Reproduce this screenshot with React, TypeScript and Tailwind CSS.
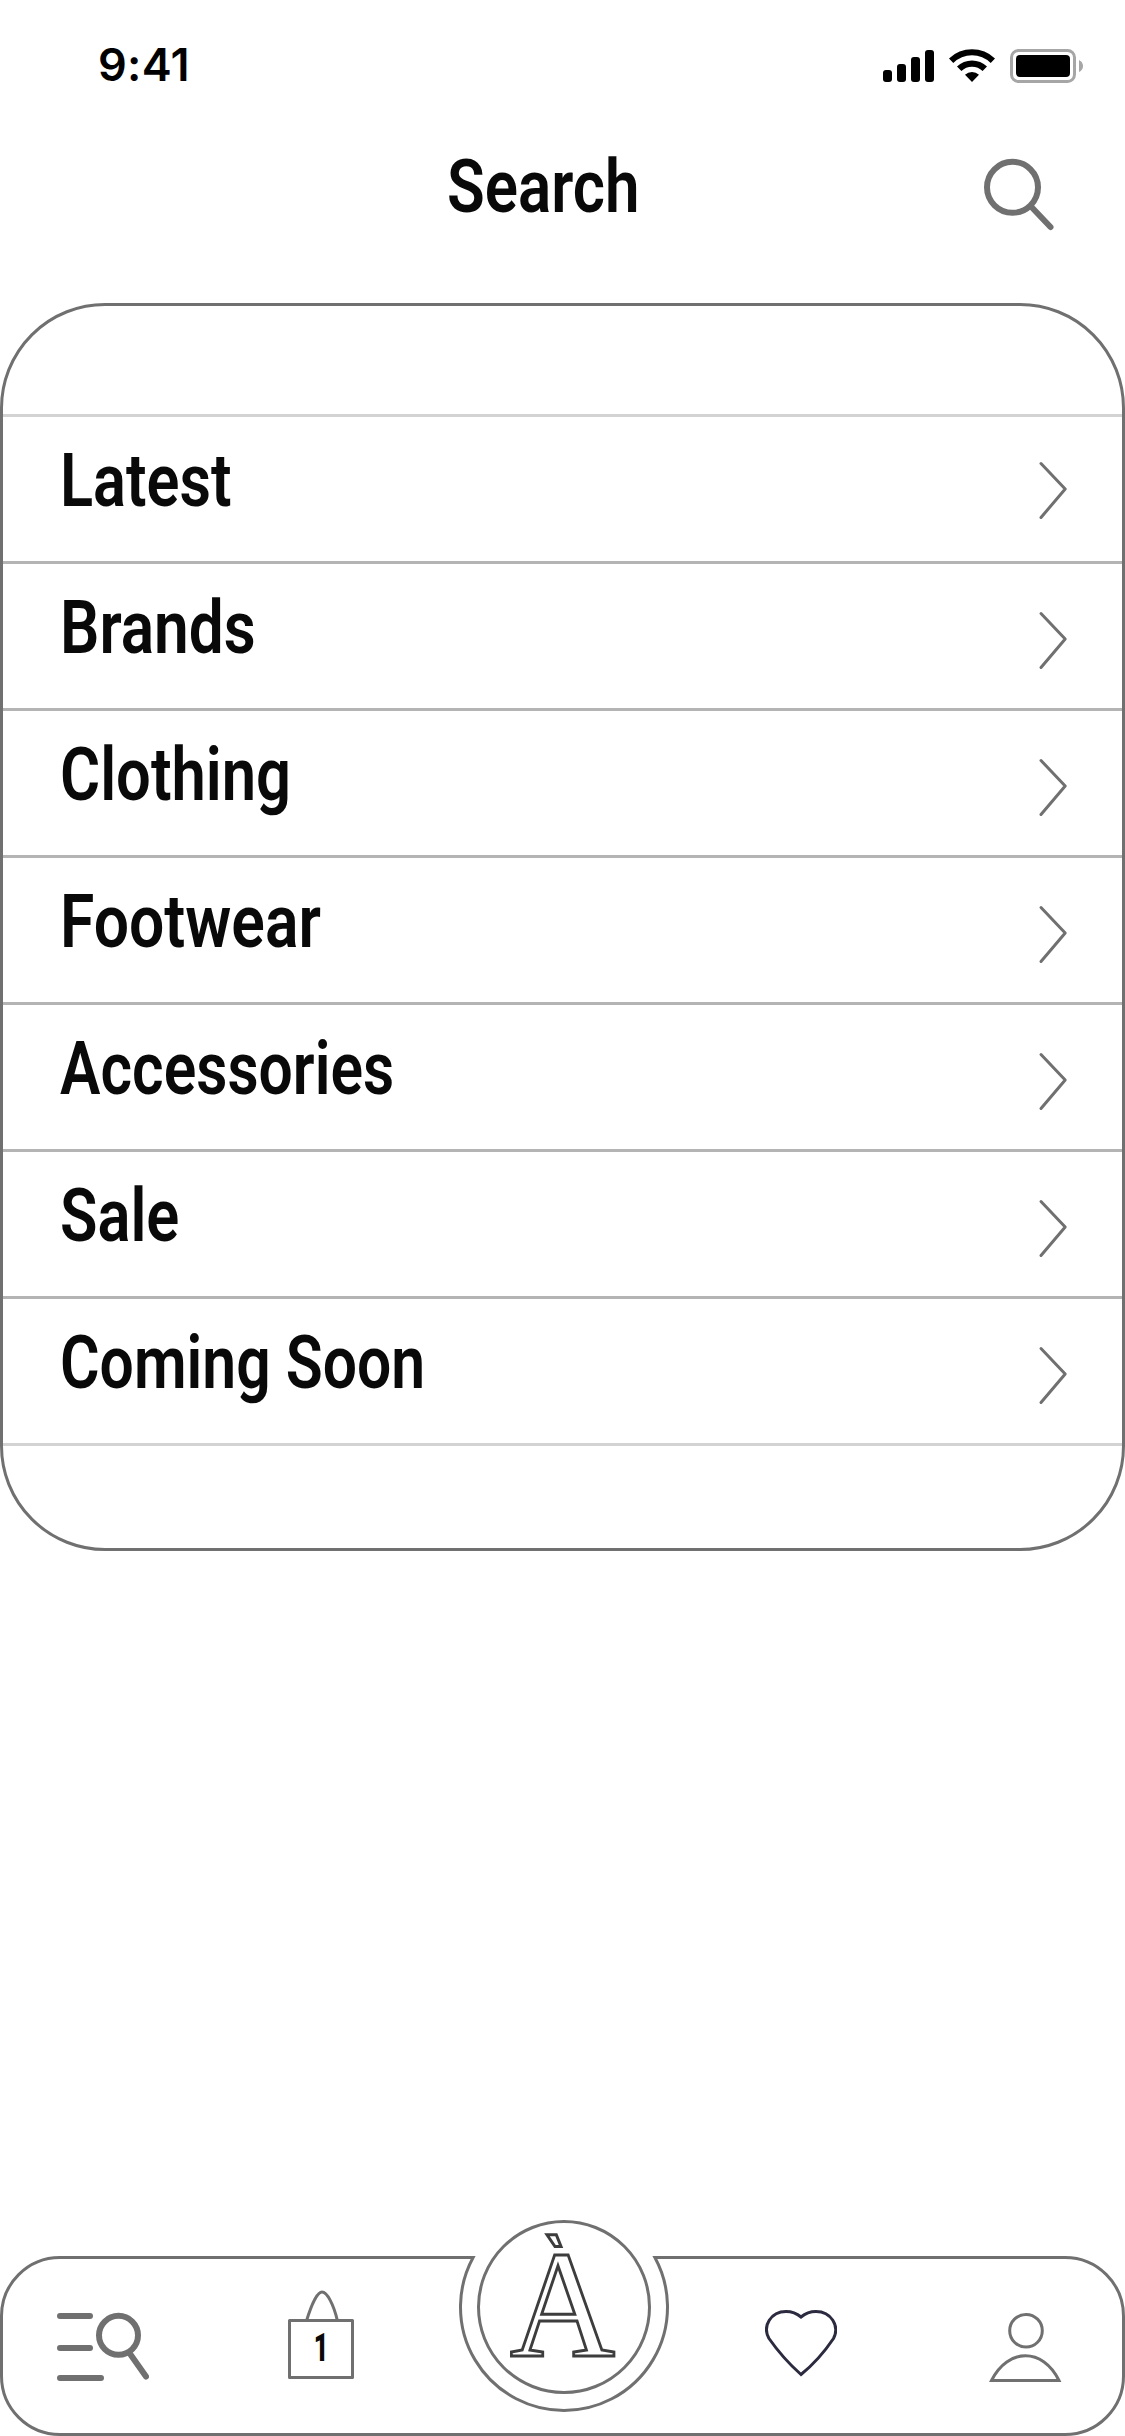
import React from "react";

type Category = { label: string; fit: string; chevron: string };

const categories: Category[] = [
  { label: "Latest", fit: "scale-x-[0.816]", chevron: "mt-[46px]" },
  { label: "Brands", fit: "scale-x-[0.828]", chevron: "mt-[49px]" },
  { label: "Clothing", fit: "scale-x-[0.819]", chevron: "mt-[49px]" },
  { label: "Footwear", fit: "scale-x-[0.832]", chevron: "mt-[49px]" },
  { label: "Accessories", fit: "scale-x-[0.808]", chevron: "mt-[49px]" },
  { label: "Sale", fit: "scale-x-[0.818]", chevron: "mt-[49px]" },
  { label: "Coming Soon", fit: "scale-x-[0.808]", chevron: "mt-[49px]" },
];

function StatusBar() {
  return (
    <div className="flex h-[132px] items-start pl-[98px] font-['Inter',sans-serif]">
      <span className="mt-[38px] w-[99px] text-[45px] leading-[54px] font-semibold tracking-[0.3px] text-black">9:41</span>
      <svg className="mt-[46px] ml-[683px]" width="210" height="40" viewBox="880 46 210 40">
        <rect x="883" y="70" width="9" height="12" rx="3" />
        <rect x="897" y="64" width="9" height="18" rx="3" />
        <rect x="911" y="57" width="9" height="25" rx="3" />
        <rect x="925" y="50" width="9" height="32" rx="3" />
        <path d="M949 58.5A33 33 0 0 1 995 58.5L990.7 63A26.7 26.7 0 0 0 953.3 63ZM957 66.5A21.5 21.5 0 0 1 987 66.5L982.6 71A15.2 15.2 0 0 0 961.4 71ZM965 74.7A10.3 10.3 0 0 1 979 74.7L972 82Z" />
        <rect x="1011.5" y="50.5" width="63" height="31" rx="7" fill="none" stroke="#a6a6a6" strokeWidth="3" />
        <rect x="1016" y="55" width="54" height="22" rx="4" />
        <path d="M1079 60Q1083 62 1083 66T1079 72Z" fill="#a6a6a6" />
      </svg>
    </div>
  );
}

function Header() {
  return (
    <header className="flex h-[171px] items-start pl-[447px]">
      <h1 className="mt-[10px] w-[529px] origin-left scale-x-[0.824] text-[75px] leading-[88px] font-[620] text-[#0a0909]">Search</h1>
      <svg className="mt-[24px]" width="80" height="80" viewBox="976 156 80 80" fill="none" stroke="#707070" strokeWidth="6" strokeLinecap="round">
        <circle cx="1012.5" cy="187.3" r="25.5" />
        <path d="M1031 206.5L1050.5 227" />
      </svg>
    </header>
  );
}

function CategoryList() {
  return (
    <main className="flex h-[1248px] flex-col rounded-[105px] border-[3px] border-[#707070] pt-[108px]">
      {categories.map(({ label, fit, chevron }) => (
        <button key={label} className="flex h-[147px] w-full shrink-0 items-start border-t-[3px] border-[#b4b4b4] pl-[57px] text-left first:border-[#d3d3d3]">
          <span className={`${fit} mt-[19px] w-[976px] origin-left text-[75px] leading-[88px] font-[620] whitespace-nowrap text-[#0a0909]`}>{label}</span>
          <svg className={`${chevron} shrink-0 overflow-visible`} width="32" height="60" viewBox="1036 463 32 60" fill="none" stroke="#707070" strokeWidth="3" strokeLinecap="round" strokeLinejoin="round">
            <path d="M1041 463.500L1065.200 489L1041 517.500" />
          </svg>
        </button>
      ))}
      <div className="h-[3px] bg-[#d3d3d3]" />
    </main>
  );
}

function TabBar() {
  return (
    <nav className="mt-auto flex h-[180px] items-start rounded-[60px] border-[3px] border-[#707070] pl-[54px]">
      <svg className="mt-[51px]" width="92" height="74" viewBox="57 2310 92 74" fill="none" stroke="#707070" strokeWidth="6" strokeLinecap="round">
        <path d="M60 2316H90M60 2348H90M60 2378H101" />
        <circle cx="118.500" cy="2335.300" r="19.500" />
        <path d="M130.500 2354.500L146 2376.500" />
      </svg>
      <div className="relative mt-[31px] ml-[139px] h-[90px] w-[66px]">
        <svg width="66" height="90" viewBox="288 2290 66 90" fill="none" stroke="#707070" strokeWidth="3" strokeLinejoin="round">
          <rect x="289.500" y="2320.500" width="63" height="57" />
          <path d="M306.500 2321C311 2306 317 2292 322 2292S333.500 2304 337.500 2321" />
        </svg>
        <span className="absolute top-[35px] left-0 w-[66px] scale-x-[0.65] text-center text-[39px] leading-[46px] font-black text-[#0a0909]">1</span>
      </div>
      <div className="relative -mt-[43px] ml-[102px] h-[204px] w-[216px]">
        <svg width="216" height="204" viewBox="456 2216 216 204" fill="none" stroke="#707070" strokeWidth="3">
          <circle cx="564" cy="2307" r="103.500" fill="#fff" stroke="none" />
          <path d="M456 2257.500H473.100A103.500 103.500 0 1 0 654.900 2257.500H672" />
          <circle cx="564" cy="2307" r="85.500" />
          <path d="M547 2234.800H556.300L561 2246.500H555Z" stroke="#3d3d3d" />
        </svg>
        <span className="absolute top-[12px] left-0 w-[213px] scale-x-95 text-center font-['Liberation_Serif',serif] text-[153px] leading-[153px] text-white [clip-path:inset(23px_0_0_0)] [-webkit-text-stroke:3px_#3d3d3d]">À</span>
      </div>
      <svg className="mt-[49px] ml-[93px]" width="72" height="70" viewBox="765 2308 72 70" fill="none" stroke="#2b2a3f" strokeWidth="3">
        <path d="M801 2374.500Q783 2358.500 769 2338.500C762 2326 771 2311.500 786 2311.500Q794.500 2311.500 801 2317Q807.500 2311.500 816 2311.500C831 2311.500 840 2326 833.500 2338.500Q819 2360 801 2374.500Z" />
      </svg>
      <svg className="mt-[51px] ml-[152px]" width="74" height="74" viewBox="989 2310 74 74" fill="none" stroke="#707070" strokeWidth="3">
        <circle cx="1026" cy="2330.700" r="16.300" />
        <path d="M991.500 2380.500C1008 2347.500 1043 2347.500 1059 2380.500Z" />
      </svg>
    </nav>
  );
}

export default function App() {
  return (
    <div className="flex h-[2436px] w-[1125px] flex-col overflow-hidden bg-white font-['Roboto',sans-serif]">
      <StatusBar />
      <Header />
      <CategoryList />
      <TabBar />
    </div>
  );
}
